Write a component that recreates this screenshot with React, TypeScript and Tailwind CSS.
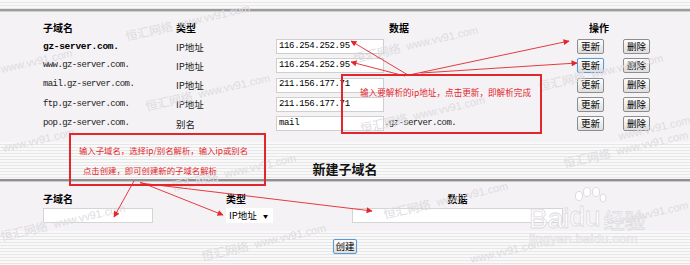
import React from "react";

const STRIPES =
  "bg-[repeating-linear-gradient(to_bottom,#f9f9f9_0px,#f9f9f9_2px,#e7e7e7_2px,#e7e7e7_3px)]";

type RowProps = {
  name: string;
  bold?: boolean;
  type: string;
  data: string;
  suffix?: string;
  focus?: boolean;
};

function Btn({ label, focus }: { label: string; focus?: boolean }) {
  return (
    <div
      className={
        focus
          ? "flex h-[15px] w-[27px] items-center justify-center rounded-[2px] border border-[#5b9bd5] bg-[linear-gradient(to_bottom,#fdfdfd,#dedede)] text-[9.5px] leading-none text-black shadow-[0_0_1px_#8ec2ee]"
          : "flex h-[15px] w-[27px] items-center justify-center rounded-[2px] border border-[#8d8d8d] bg-[linear-gradient(to_bottom,#fdfdfd,#dedede)] text-[9.5px] leading-none text-black"
      }
    >
      {label}
    </div>
  );
}

function Row({ name, bold, type, data, suffix, focus }: RowProps) {
  return (
    <div className="flex h-[19.3px] items-center">
      <div
        className={
          bold
            ? "w-[133px] font-['Liberation_Mono',monospace] text-[9.5px] font-bold tracking-[-0.3px] text-black"
            : "w-[133px] font-['Liberation_Mono',monospace] text-[9px] tracking-[-0.6px] text-[#222]"
        }
      >
        {name}
      </div>
      <div className="w-[100px] text-[9.5px] text-[#222]">{type}</div>
      <div className="flex w-[301px] items-center">
        <div className="flex h-[15px] w-[108px] items-center border border-[#cfcfcf] bg-white pl-[2px] font-['Liberation_Mono',monospace] text-[9px] tracking-[-0.35px] text-black">
          {data}
        </div>
        {suffix && (
          <span className="font-['Liberation_Mono',monospace] text-[9px] tracking-[-0.6px] text-[#222]">
            {suffix}
          </span>
        )}
      </div>
      <div className="flex gap-[19px]">
        <Btn label="更新" focus={focus} />
        <Btn label="删除" />
      </div>
    </div>
  );
}

function Watermark({
  x,
  y,
  rot = -13,
  cn = true,
  url = true,
}: {
  x: number;
  y: number;
  rot?: number;
  cn?: boolean;
  url?: boolean;
}) {
  return (
    <div
      className="pointer-events-none absolute flex items-end gap-[6px] whitespace-nowrap text-[#dedbdf]"
      style={{ left: x, top: y, transform: `rotate(${rot}deg)`, transformOrigin: "left bottom" }}
    >
      {cn && <span className="text-[12px] leading-none">恒汇网络</span>}
      {url && <span className="font-['Liberation_Sans',sans-serif] text-[11px] leading-none">www.vv91.com</span>}
    </div>
  );
}

export default function App() {
  const rows: RowProps[] = [
    { name: "gz-server.com.", bold: true, type: "IP地址", data: "116.254.252.95" },
    { name: "www.gz-server.com.", type: "IP地址", data: "116.254.252.95", focus: true },
    { name: "mail.gz-server.com.", type: "IP地址", data: "211.156.177.71" },
    { name: "ftp.gz-server.com.", type: "IP地址", data: "211.156.177.71" },
    { name: "pop.gz-server.com.", type: "别名", data: "mail", suffix: ".gz-server.com." },
  ];

  return (
    <div className="relative h-[265px] w-[690px] overflow-hidden bg-[#f4f2f5] font-['Noto_Sans_CJK_SC','Noto_Sans',sans-serif] text-black">
      {/* top stripes */}
      <div className={`h-[9px] ${STRIPES}`} />
      <div className="h-[2px] bg-[#9c9c9c]" />
      <div className="h-[1px] bg-[#cfcfcf]" />

      {/* existing records */}
      <div className="bg-[#f4f2f5] pb-[9px] pl-[43px] pt-[6px]">
        <div className="flex h-[19px] items-center text-[10px] font-bold">
          <div className="w-[133px]">子域名</div>
          <div className="w-[100px]">类型</div>
          <div className="w-[301px] pl-[113px]">数据</div>
          <div className="pl-[12px]">操作</div>
        </div>
        {rows.map((r) => (
          <Row key={r.name} {...r} />
        ))}
      </div>

      {/* title */}
      <div className={`flex h-[37px] items-end justify-center pb-[2px] ${STRIPES}`}>
        <span className="text-[13px] font-bold leading-[16px] text-[#111]">新建子域名</span>
      </div>
      <div className="h-[2px] bg-[#8f8f8f]" />
      <div className="h-[1px] bg-[#c9c9c9]" />

      {/* create form */}
      <div className="flex h-[49px] bg-[#f4f2f5] pl-[43px] pt-[11px]">
        <div className="flex w-[183px] flex-col gap-[3px]">
          <div className="text-[10px] font-bold leading-[12px]">子域名</div>
          <div className="h-[15px] w-[110px] border border-[#d4d4d4] bg-white" />
        </div>
        <div className="flex w-[126px] flex-col gap-[3px]">
          <div className="text-[10px] font-bold leading-[12px]">类型</div>
          <div className="flex h-[15px] w-[47px] items-center justify-between bg-white pl-[3px] pr-[5px] text-[9.5px] leading-none">
            <span>IP地址</span>
            <span className="text-[5px]">▼</span>
          </div>
        </div>
        <div className="flex w-[211px] flex-col items-center gap-[3px]">
          <div className="text-[10px] font-bold leading-[12px]">数据</div>
          <div className="h-[15px] w-[211px] border border-[#d4d4d4] bg-white" />
        </div>
      </div>

      {/* submit */}
      <div className={`flex h-[40px] justify-center pt-[8px] ${STRIPES}`}>
        <div className="flex h-[15px] w-[24px] items-center justify-center rounded-[2px] border border-[#5b9bd5] bg-[linear-gradient(to_bottom,#fdfdfd,#dedede)] text-[9.5px] leading-none shadow-[0_0_1px_#8ec2ee]">
          创建
        </div>
      </div>

      {/* watermarks */}
      <Watermark x={127} y={30} />
      <Watermark x={2} y={64} cn={false} />
      <Watermark x={147} y={100} />
      <Watermark x={355} y={52} />
      <Watermark x={362} y={122} />
      <Watermark x={540} y={80} />
      <Watermark x={620} y={131} cn={false} />
      <Watermark x={4} y={143} cn={false} />
      <Watermark x={173} y={180} />
      <Watermark x={2} y={230} />
      <Watermark x={203} y={250} />
      <Watermark x={565} y={157} />
      <Watermark x={385} y={208} />
      <Watermark x={472} y={254} cn={false} />
      <Watermark x={618} y={216} cn={false} />

      {/* baidu jingyan logo */}
      <div className="pointer-events-none absolute left-[529px] top-[205px] flex flex-col">
        <div className="flex items-end">
          <span className="font-['Liberation_Sans',sans-serif] text-[28px] leading-[24px] text-white [-webkit-text-stroke:0.8px_#dddadf]">
            Bai
          </span>
          <div className="relative">
            <svg width="38" height="26" viewBox="0 0 38 26" className="absolute left-[2px] top-[-18px]">
              <g fill="#fff" stroke="#dddadf" strokeWidth="1">
                <ellipse cx="8" cy="9" rx="3.5" ry="4.5" />
                <ellipse cx="16" cy="5" rx="3.5" ry="4.5" />
                <ellipse cx="25" cy="5" rx="3.5" ry="4.5" />
                <ellipse cx="32" cy="11" rx="3" ry="4" />
              </g>
            </svg>
            <span className="relative font-['Liberation_Sans',sans-serif] text-[28px] leading-[24px] text-white [-webkit-text-stroke:0.8px_#dddadf]">
              du
            </span>
          </div>
          <span className="ml-[3px] text-[21px] leading-[24px] text-white [-webkit-text-stroke:0.8px_#dddadf]">
            经验
          </span>
        </div>
        <span className="font-['Liberation_Sans',sans-serif] text-[13.5px] leading-[16px] text-white [-webkit-text-stroke:0.6px_#dddadf]">
          jingyan.baidu.com
        </span>
      </div>

      {/* annotation boxes */}
      <div className="pointer-events-none absolute left-[341px] top-[74px] h-[60px] w-[201px] border-2 border-[#e3262b]">
        <div className="pl-[17px] pt-[10px] text-[8.6px] leading-[12px] text-[#e3262b]">
          输入要解析的ip地址，点击更新，即解析完成
        </div>
      </div>
      <div className="pointer-events-none absolute left-[69px] top-[133px] h-[53px] w-[197px] border-2 border-[#e3262b]">
        <div className="flex flex-col pl-[8px] pt-[9px] text-[8.4px] leading-[12px] text-[#e3262b]">
          <span>输入子域名，选择ip/别名解析，输入ip或别名</span>
          <span className="pl-[4px] pt-[8px]">点击创建，即可创建新的子域名解析</span>
        </div>
      </div>

      {/* arrows */}
      <svg
        className="pointer-events-none absolute left-0 top-0"
        width="690"
        height="265"
        viewBox="0 0 690 265"
      >
        <defs>
          <marker id="ah" viewBox="0 0 10 10" refX="9" refY="5" markerWidth="8" markerHeight="6" orient="auto" markerUnits="userSpaceOnUse">
            <path d="M0 0 L10 5 L0 10 z" fill="#e3262b" />
          </marker>
        </defs>
        <g stroke="#e3262b" strokeWidth="0.9" fill="none" markerEnd="url(#ah)">
          <line x1="408" y1="75" x2="351" y2="41" />
          <line x1="405" y1="76" x2="351" y2="62" />
          <line x1="409" y1="75" x2="569" y2="41" />
          <line x1="421" y1="73" x2="577" y2="63" />
          <line x1="134" y1="181" x2="114" y2="217" />
          <line x1="140" y1="182" x2="223" y2="215" />
          <line x1="140" y1="183" x2="372" y2="211" />
        </g>
      </svg>
    </div>
  );
}
